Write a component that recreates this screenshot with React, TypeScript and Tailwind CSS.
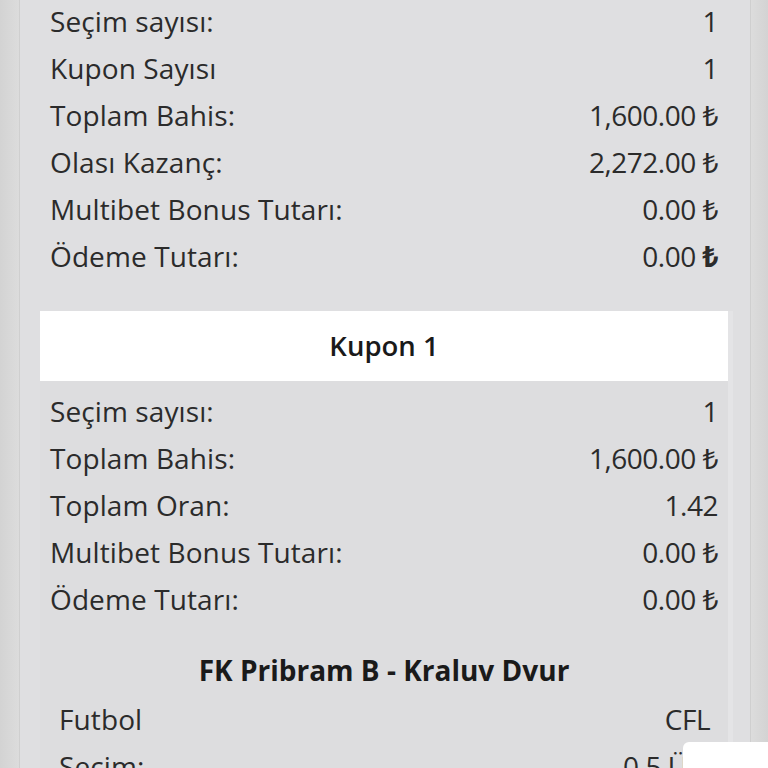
import React from "react";

const font = { fontFamily: '"Open Sans", "Noto Sans", "DejaVu Sans", sans-serif' };

function Row({ label, value, boldSign }: { label: string; value: string; boldSign?: boolean }) {
  const hasLira = value.endsWith("₺");
  const num = hasLira ? value.slice(0, -1) : value;
  return (
    <div className="flex h-[47px] items-center justify-between">
      <span className="tracking-[0.1px]">{label}</span>
      <span className="tracking-[-0.5px]">
        {num}
        {hasLira && <span className={boldSign ? "font-bold" : ""}>₺</span>}
      </span>
    </div>
  );
}

export default function App() {
  return (
    <div
      className="relative flex h-[768px] w-[768px] overflow-hidden bg-[#d8d8d8] text-[28px] text-[#2b2b2b]"
      style={font}
    >
      <div className="w-[19px] shrink-0 bg-gradient-to-r from-[#d3d3d3] to-[#dcdcdc]" />
      <div className="w-px shrink-0 bg-[#cfcfcf]" />
      <div className="flex w-[730px] shrink-0 flex-col bg-[#dfdfe1]">
        <div className="-mt-[3px] pl-[30px] pr-[32px]">
          <Row label="Seçim sayısı:" value="1" />
          <Row label="Kupon Sayısı" value="1" />
          <Row label="Toplam Bahis:" value="1,600.00 ₺" />
          <Row label="Olası Kazanç:" value="2,272.00 ₺" />
          <Row label="Multibet Bonus Tutarı:" value="0.00 ₺" />
          <Row label="Ödeme Tutarı:" value="0.00 ₺" boldSign />
        </div>
        <div className="ml-[20px] mr-[22px] mt-[32px] flex flex-col bg-[#dddddf] shadow-[5px_0_0_#e4e4e6]">
          <div className="flex h-[70px] items-center justify-center bg-white text-[27.5px] font-semibold text-[#1a1a1a]">
            Kupon 1
          </div>
          <div className="mt-[6px] pl-[10px] pr-[10px]">
            <Row label="Seçim sayısı:" value="1" />
            <Row label="Toplam Bahis:" value="1,600.00 ₺" />
            <Row label="Toplam Oran:" value="1.42" />
            <Row label="Multibet Bonus Tutarı:" value="0.00 ₺" />
            <Row label="Ödeme Tutarı:" value="0.00 ₺" />
          </div>
          <div className="mt-[24px] flex h-[48px] items-center justify-center font-bold text-[#1a1a1a]">
            FK Pribram B - Kraluv Dvur
          </div>
          <div className="mt-[1px] pl-[19px] pr-[18px]">
            <Row label="Futbol" value="CFL" />
            <Row label="Seçim:" value="0.5 Üst" />
          </div>
        </div>
      </div>
      <div className="w-px shrink-0 bg-[#cfcfcf]" />
      <div className="flex-1 bg-gradient-to-r from-[#dcdcdc] to-[#d3d3d3]" />
      <div className="absolute bottom-0 right-0 h-[26px] w-[85px] rounded-tl-[6px] bg-white" />
    </div>
  );
}
